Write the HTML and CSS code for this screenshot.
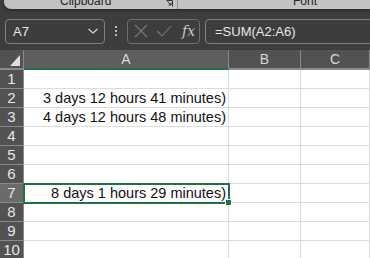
FILE: index.html
```html
<!DOCTYPE html>
<html lang="en">
  <head>
    <meta charset="UTF-8" />
    <meta name="viewport" content="width=device-width, initial-scale=1.0" />
    <link rel="stylesheet" href="styles.css">
  </head>
  <body>
    <div class="ribbon">
      <div class="group group-clipboard">
        <span class="group-label">Clipboard</span>
        <svg class="launcher" width="7" height="7" viewBox="0 0 7 7">
          <path d="M0.5 0.5 H6.5 V6.5" fill="none" stroke="#333" stroke-width="1" />
          <path d="M1.5 1.5 L5 5 M2.5 5 H5 V2.5" fill="none" stroke="#333" stroke-width="1" />
        </svg>
      </div>
      <div class="group group-font">
        <span class="group-label">Font</span>
      </div>
    </div>

    <div class="formula-bar">
      <div class="name-box">
        <span>A7</span>
        <svg width="12" height="8" viewBox="0 0 12 8">
          <path d="M1.5 2 L6 6 L10.5 2" fill="none" stroke="#d8d8d8" stroke-width="1.2" />
        </svg>
      </div>
      <div class="dots"><i></i><i></i><i></i></div>
      <div class="fx-box">
        <svg width="14" height="14" viewBox="0 0 14 14">
          <path d="M1 1 L13 13 M13 1 L1 13" stroke="#7a7a7a" stroke-width="1.1" />
        </svg>
        <svg width="16" height="12" viewBox="0 0 16 12">
          <path d="M1 6 L6 11 L15 1" fill="none" stroke="#7a7a7a" stroke-width="1.1" />
        </svg>
        <span class="fx">fx</span>
      </div>
      <div class="formula">=SUM(A2:A6)</div>
    </div>

    <div class="sheet">
      <div class="corner"><span class="tri"></span></div>
      <div class="col-head active">A</div>
      <div class="col-head">B</div>
      <div class="col-head">C</div>

      <div class="row-head">1</div><div class="cell"></div><div class="cell"></div><div class="cell"></div>
      <div class="row-head">2</div><div class="cell num">3 days 12 hours 41 minutes)</div><div class="cell"></div><div class="cell"></div>
      <div class="row-head">3</div><div class="cell num">4 days 12 hours 48 minutes)</div><div class="cell"></div><div class="cell"></div>
      <div class="row-head">4</div><div class="cell"></div><div class="cell"></div><div class="cell"></div>
      <div class="row-head">5</div><div class="cell"></div><div class="cell"></div><div class="cell"></div>
      <div class="row-head">6</div><div class="cell"></div><div class="cell"></div><div class="cell"></div>
      <div class="row-head active">7</div><div class="cell num selected">8 days 1 hours 29 minutes)<span class="handle"></span></div><div class="cell"></div><div class="cell"></div>
      <div class="row-head">8</div><div class="cell"></div><div class="cell"></div><div class="cell"></div>
      <div class="row-head">9</div><div class="cell"></div><div class="cell"></div><div class="cell"></div>
      <div class="row-head">10</div><div class="cell"></div><div class="cell"></div><div class="cell"></div>
    </div>
  </body>
</html>
```

FILE: styles.css
```css
body {
  margin: 0;
  padding: 0;
  width: 370px;
  height: 258px;
  overflow: hidden;
  background-color: #3d3d3d;
  font-family: "Liberation Sans", Arial, sans-serif;
}
.ribbon {
  display: flex;
  height: 9px;
  margin-left: 4px;
  background-color: #c2c2c2;
  border-radius: 0 0 0 7px;
  overflow: hidden;
  box-shadow: 0 2px 2px #2e2e2e;
}
.group {
  display: flex;
  align-items: flex-end;
  position: relative;
  height: 9px;
}
.group-label {
  font-size: 12px;
  line-height: 12px;
  color: #262626;
  margin-bottom: 2px;
}
.group-clipboard {
  width: 174px;
  padding-left: 56px;
  box-sizing: border-box;
  border-right: 1px solid #8f8f8f;
}
.launcher {
  position: absolute;
  left: 162px;
  top: 0;
}
.group-font {
  padding-left: 115px;
}
.formula-bar {
  display: flex;
  align-items: center;
  height: 26px;
  margin-top: 9px;
  padding-left: 5px;
}
.name-box {
  display: flex;
  align-items: center;
  justify-content: space-between;
  box-sizing: border-box;
  width: 100px;
  height: 25px;
  padding: 0 5px 0 7px;
  border: 1px solid #7e7e7e;
  border-radius: 4px;
  color: #e8e8e8;
  font-size: 13px;
}
.dots {
  display: flex;
  flex-direction: column;
  gap: 2px;
  width: 22px;
  align-items: center;
}
.dots i {
  width: 2px;
  height: 2px;
  background-color: #bdbdbd;
}
.fx-box {
  display: flex;
  align-items: center;
  gap: 8px;
  box-sizing: border-box;
  width: 73px;
  height: 25px;
  padding-left: 6px;
  border: 1px solid #6e6e6e;
  border-radius: 4px;
}
.fx {
  font-family: "DejaVu Serif", "Liberation Serif", serif;
  font-style: italic;
  font-size: 14px;
  color: #c8c8c8;
  margin-left: 2px;
}
.formula {
  flex: 1;
  box-sizing: border-box;
  height: 25px;
  margin-left: 5px;
  margin-right: -4px;
  padding-left: 9px;
  line-height: 23px;
  border: 1px solid #7e7e7e;
  border-radius: 4px;
  color: #e8e8e8;
  font-size: 13px;
}
.sheet {
  display: grid;
  grid-template-columns: 24px 205px 72px 1fr;
  grid-template-rows: 20px repeat(10, 19px);
  margin-top: 6px;
  background-color: #ffffff;
}
.corner {
  position: relative;
  background-color: #525252;
  border-right: 1px solid #8a8a8a;
  border-bottom: 2px solid #8a8a8a;
}
.tri {
  position: absolute;
  right: 3px;
  bottom: 2px;
  width: 0;
  height: 0;
  border-left: 10px solid transparent;
  border-bottom: 11px solid #dedede;
}
.col-head {
  background-color: #525252;
  color: #d8d8d8;
  font-size: 14px;
  line-height: 18px;
  text-align: center;
  border-right: 1px solid #8a8a8a;
  border-bottom: 2px solid #8a8a8a;
}
.col-head.active {
  background-color: #5e5e5e;
  border-bottom-color: #1f7244;
}
.row-head {
  box-sizing: border-box;
  background-color: #525252;
  color: #e6e6e6;
  font-size: 15px;
  line-height: 18px;
  text-align: center;
  border-right: 1px solid #8a8a8a;
  border-bottom: 1px solid #8a8a8a;
}
.row-head.active {
  background-color: #6b6b6b;
}
.cell {
  box-sizing: border-box;
  border-right: 1px solid #dcdcdc;
  border-bottom: 1px solid #dcdcdc;
}
.num {
  font-size: 14.5px;
  line-height: 18px;
  text-align: right;
  padding-right: 2px;
  color: #111111;
  white-space: nowrap;
}
.selected {
  position: relative;
  outline: 2px solid #1f7244;
  outline-offset: -1px;
  z-index: 1;
}
.handle {
  position: absolute;
  right: -4px;
  bottom: -4px;
  width: 5px;
  height: 5px;
  background-color: #1f7244;
  border: 1px solid #ffffff;
}
```
